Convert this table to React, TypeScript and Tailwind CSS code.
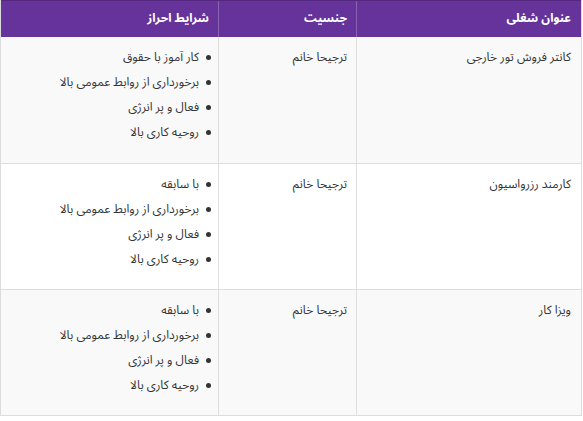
import React from "react";

const rows = [
  {
    title: "کانتر فروش تور خارجی",
    gender: "ترجیحا خانم",
    items: ["کار آموز با حقوق", "برخورداری از روابط عمومی بالا", "فعال و پر انرژی", "روحیه کاری بالا"],
    bg: "bg-[#f9f9f9]",
    h: "h-[127px]",
  },
  {
    title: "کارمند رزرواسیون",
    gender: "ترجیحا خانم",
    items: ["با سابقه", "برخورداری از روابط عمومی بالا", "فعال و پر انرژی", "روحیه کاری بالا"],
    bg: "bg-white",
    h: "h-[126px]",
  },
  {
    title: "ویزا کار",
    gender: "ترجیحا خانم",
    items: ["با سابقه", "برخورداری از روابط عمومی بالا", "فعال و پر انرژی", "روحیه کاری بالا"],
    bg: "bg-[#f9f9f9]",
    h: "h-[125px]",
  },
];

export default function App() {
  return (
    <div className="w-[583px] h-[421px] bg-white" style={{ fontFamily: '"Noto Sans Arabic", "Noto Naskh Arabic", "DejaVu Sans Condensed", "DejaVu Sans", Tahoma, sans-serif' }}>
      <div dir="rtl" className="w-[582px] border border-[#dcdcdc] border-t-0 text-[12px] text-[#333]">
        <div className="flex h-[37px] bg-[#66339a] border-t border-[#55287f] text-white font-bold">
          <div className="w-[225px] flex items-center px-[10px] border-l border-[#8a63b5]">عنوان شغلی</div>
          <div className="w-[138px] flex items-center px-[9px] border-l border-[#8a63b5]">جنسیت</div>
          <div className="flex-1 flex items-center px-[9px]">شرایط احراز</div>
        </div>
        {rows.map((r, i) => (
          <div key={i} className={`flex ${r.h} ${r.bg} border-b border-[#dedede] last:border-b-0`}>
            <div className="w-[225px] px-[10px] pt-[8px] border-l border-[#dedede] leading-[25px]">{r.title}</div>
            <div className="w-[138px] px-[9px] pt-[8px] border-l border-[#dedede] leading-[25px]">{r.gender}</div>
            <div className="flex-1 pr-[7px] pt-[8px]">
              <ul className="flex flex-col">
                {r.items.map((it, j) => (
                  <li key={j} className="flex items-center gap-[7px] h-[25px] leading-[25px]">
                    <span className="w-[5px] h-[5px] rounded-full bg-[#333] shrink-0" />
                    <span>{it}</span>
                  </li>
                ))}
              </ul>
            </div>
          </div>
        ))}
      </div>
    </div>
  );
}
